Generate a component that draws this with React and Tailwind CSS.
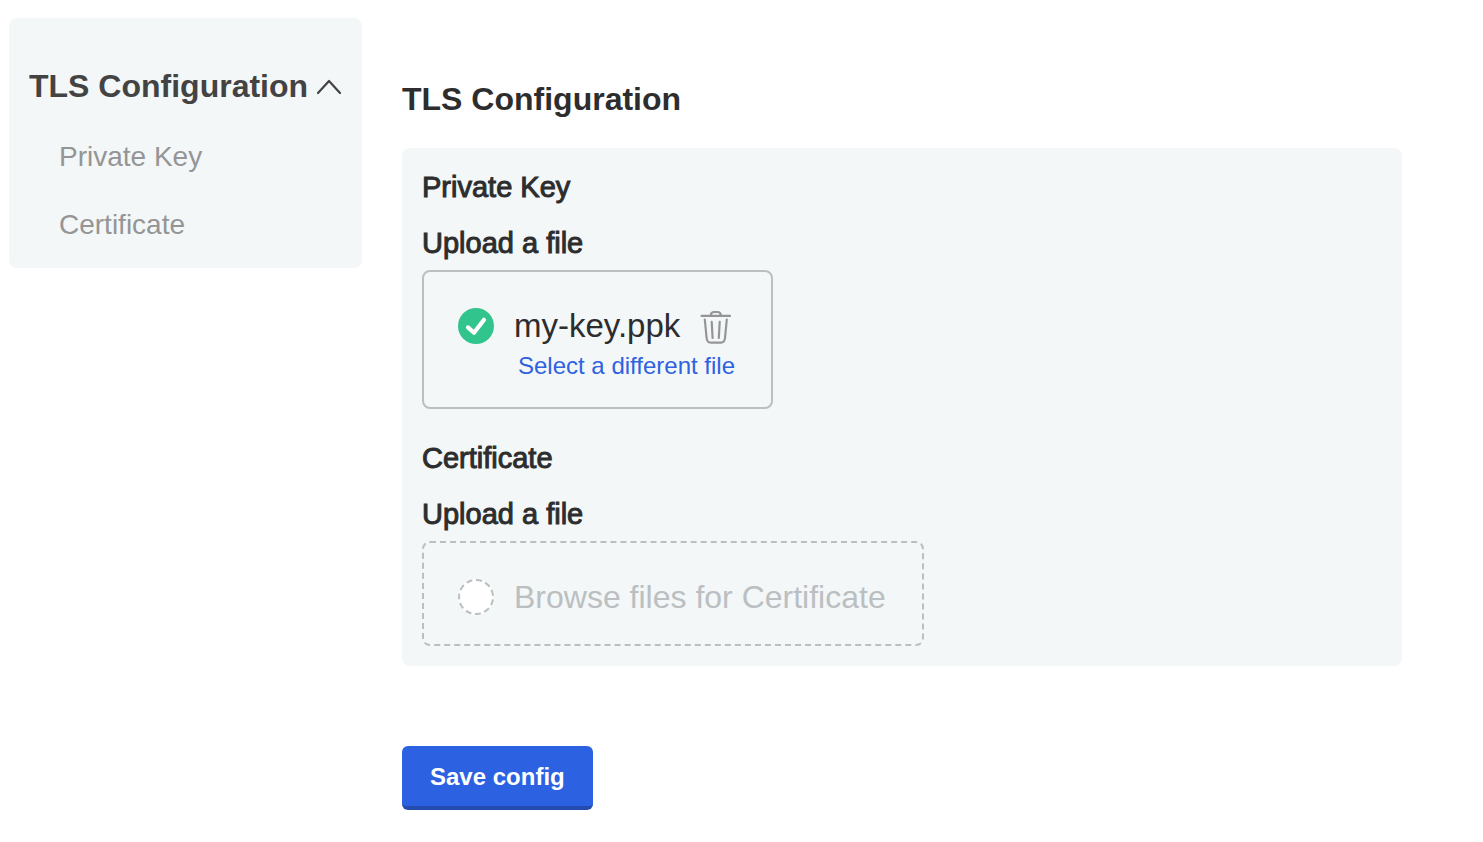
import { useId } from "react";

function CheckIcon() {
  return (
    <svg viewBox="0 0 36 36" className="size-9 shrink-0" aria-hidden="true">
      <circle cx="18" cy="18" r="18" fill="#32c48d" />
      <path
        d="M10 19.4 L16 24.8 L26 11.8"
        fill="none"
        stroke="#fff"
        strokeWidth="4.2"
        strokeLinecap="round"
        strokeLinejoin="round"
      />
    </svg>
  );
}

function TrashIcon() {
  return (
    <svg
      viewBox="0 0 32 36"
      className="h-9 w-8"
      fill="none"
      stroke="#959595"
      strokeWidth="2.2"
      strokeLinecap="round"
      strokeLinejoin="round"
      aria-hidden="true"
    >
      <path d="M1.600 7.900h28.400" />
      <path d="M10.800 7.500C10.800 5.200 12 4 14.200 4h3.200c2.200 0 3.400 1.200 3.400 3.500" />
      <path d="M4.800 11.500L6.600 30c.3 3.200 1.600 4.700 4.200 4.700h10c2.600 0 3.900-1.500 4.200-4.700L26.800 11.500" />
      <path d="M11.700 13.800l.9 16.200M19.700 13.800l-.9 16.200" />
    </svg>
  );
}

function ChevronUp() {
  return (
    <svg
      viewBox="0 0 26 16"
      className="mt-[2px] h-4 w-[26px]"
      fill="none"
      stroke="#434343"
      strokeWidth="2.2"
      strokeLinecap="round"
      strokeLinejoin="round"
      aria-hidden="true"
    >
      <path d="M2 14 L13 2 L24 14" />
    </svg>
  );
}

function Sidebar() {
  return (
    <nav className="w-[353px] shrink-0 rounded-lg bg-[#f3f7f8] px-5 pt-12 pb-[27px]">
      <button
        type="button"
        aria-expanded="true"
        className="flex items-center gap-2 text-[32px] leading-10 font-bold whitespace-nowrap text-[#434343]"
      >
        TLS Configuration
        <ChevronUp />
      </button>
      <ul className="mt-[35px] flex flex-col gap-9 pl-[30px] text-[28px] leading-8 text-[#959595]">
        <li>
          <a href="#private-key">Private Key</a>
        </li>
        <li>
          <a href="#certificate">Certificate</a>
        </li>
      </ul>
    </nav>
  );
}

function Field({ id, title, children }) {
  return (
    <section id={id}>
      <h3 className="text-[29px] leading-8 [-webkit-text-stroke:1px]">{title}</h3>
      <p className="mt-6 mb-[11px] text-[29px] leading-8 [-webkit-text-stroke:1px]">
        Upload a file
      </p>
      {children}
    </section>
  );
}

function SelectedFile({ name }) {
  const inputId = useId();
  return (
    <div className="flex w-fit items-start gap-5 rounded-lg border-2 border-[#bbbfc1] pt-9 pr-9 pb-[23px] pl-[34px]">
      <CheckIcon />
      <div>
        <div className="flex items-center gap-5 text-[33px] leading-9 whitespace-nowrap">
          {name}
          <button type="button" aria-label={`Remove ${name}`}>
            <TrashIcon />
          </button>
        </div>
        <input id={inputId} type="file" className="sr-only" />
        <label
          htmlFor={inputId}
          className="mt-1 block cursor-pointer pl-1 text-2xl leading-9 whitespace-nowrap text-[#2f62e0]"
        >
          Select a different file
        </label>
      </div>
    </div>
  );
}

function EmptyFile({ name }) {
  const inputId = useId();
  return (
    <div>
      <input id={inputId} type="file" className="sr-only" />
      <label
        htmlFor={inputId}
        className="flex w-fit cursor-pointer items-center gap-5 rounded-lg border-2 border-dashed border-[#bbbfc1] pt-9 pr-9 pb-[29px] pl-[34px] text-[32px] leading-9 text-[#bbbfc1]"
      >
        <span className="size-9 shrink-0 rounded-full border-2 border-dashed border-[#bbbfc1] bg-white" />
        Browse files for {name}
      </label>
    </div>
  );
}

export default function App() {
  return (
    <div className="flex min-h-screen items-start gap-10 bg-white pt-[18px] pr-[81px] pb-8 pl-[9px] font-['Liberation_Sans',Arial,sans-serif] text-[#2d2d2d]">
      <Sidebar />
      <main className="min-w-0 flex-1 pt-[61px]">
        <h2 className="text-[32px] leading-10 font-bold">TLS Configuration</h2>
        <form onSubmit={(event) => event.preventDefault()}>
          <div className="mt-[29px] flex flex-col gap-[33px] rounded-lg bg-[#f3f7f8] px-5 pt-[23px] pb-5">
            <Field id="private-key" title="Private Key">
              <SelectedFile name="my-key.ppk" />
            </Field>
            <Field id="certificate" title="Certificate">
              <EmptyFile name="Certificate" />
            </Field>
          </div>
          <button
            type="submit"
            className="mt-20 rounded-md border-b-4 border-[#244cb0] bg-[#2c61e1] px-7 pt-[15px] pb-[13px] text-2xl leading-8 font-bold text-white"
          >
            Save config
          </button>
        </form>
      </main>
    </div>
  );
}
